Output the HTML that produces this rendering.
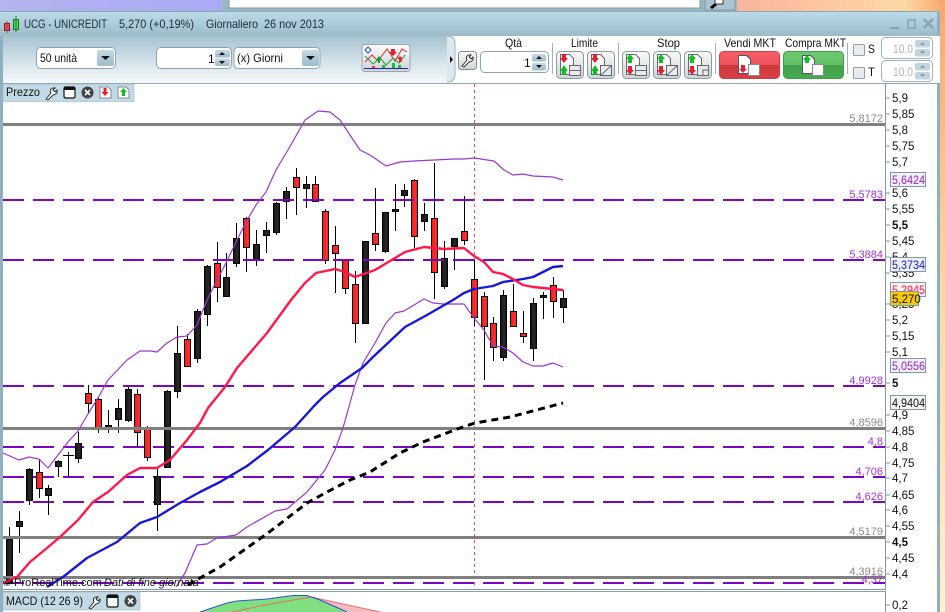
<!DOCTYPE html>
<html><head><meta charset="utf-8"><style>
html,body{margin:0;padding:0;background:#fff;overflow:hidden;width:945px;height:612px}
svg{display:block;font-family:"Liberation Sans",sans-serif;font-size:11px}
</style></head><body>
<svg width="945" height="612" viewBox="0 0 945 612" xmlns="http://www.w3.org/2000/svg">
<defs>
<linearGradient id="tb" x1="0" y1="0" x2="0" y2="1"><stop offset="0" stop-color="#bddcea"/><stop offset="1" stop-color="#9dbac8"/></linearGradient>
<linearGradient id="tool" x1="0" y1="0" x2="0" y2="1"><stop offset="0" stop-color="#a6c2d0"/><stop offset=".6" stop-color="#d8e6ec"/><stop offset="1" stop-color="#f4f8fa"/></linearGradient>
<linearGradient id="btn" x1="0" y1="0" x2="0" y2="1"><stop offset="0" stop-color="#c4d8e4"/><stop offset="1" stop-color="#9dbccd"/></linearGradient>
<linearGradient id="grey" x1="0" y1="0" x2="0" y2="1"><stop offset="0" stop-color="#fafafa"/><stop offset="1" stop-color="#cfd4d6"/></linearGradient>
<linearGradient id="or" x1="0" y1="0" x2="1" y2="0"><stop offset="0" stop-color="#f8b59e"/><stop offset=".45" stop-color="#fdc8a0"/><stop offset=".8" stop-color="#fdd8a6"/><stop offset="1" stop-color="#f6a868"/></linearGradient>
<linearGradient id="rc" x1="0" y1="0" x2="0" y2="1"><stop offset="0" stop-color="#f6a870"/><stop offset=".5" stop-color="#fdd9a8"/><stop offset="1" stop-color="#fff0d0"/></linearGradient>
<linearGradient id="lav" x1="0" y1="0" x2="1" y2="0"><stop offset="0" stop-color="#b4b4ee"/><stop offset="1" stop-color="#a9a9f6"/></linearGradient>
<linearGradient id="red" x1="0" y1="0" x2="0" y2="1"><stop offset="0" stop-color="#f46068"/><stop offset=".5" stop-color="#ee5058"/><stop offset=".51" stop-color="#cc383c"/><stop offset="1" stop-color="#d84044"/></linearGradient>
<linearGradient id="grn" x1="0" y1="0" x2="0" y2="1"><stop offset="0" stop-color="#6cc870"/><stop offset=".5" stop-color="#60c066"/><stop offset=".51" stop-color="#3ea048"/><stop offset="1" stop-color="#48aa50"/></linearGradient>
<linearGradient id="blk" x1="0" y1="0" x2="1" y2="0"><stop offset="0" stop-color="#111"/><stop offset=".6" stop-color="#2a2a2a"/><stop offset="1" stop-color="#111"/></linearGradient>
<linearGradient id="rd" x1="0" y1="0" x2="1" y2="0"><stop offset="0" stop-color="#f01818"/><stop offset=".7" stop-color="#ff3030"/><stop offset="1" stop-color="#e81818"/></linearGradient>
</defs>

<!-- desktop background -->
<rect width="945" height="612" fill="#fff"/>
<rect x="0" y="0" width="222" height="11" fill="url(#lav)"/>
<rect x="222" y="0" width="515" height="11" fill="#9db6c4"/>
<rect x="229" y="-2" width="471" height="10" fill="#fff" stroke="#7f98a6"/>
<rect x="705" y="-2" width="30" height="12" fill="#a9c3d0" stroke="#7f98a6"/>
<rect x="737" y="0" width="208" height="11" fill="url(#or)"/>
<rect x="940" y="0" width="5" height="612" fill="url(#rc)"/>
<path d="M711 8l5-4" stroke="#000" stroke-width="3"/><rect x="715" y="-2" width="8" height="6" fill="#fff" stroke="#333"/>

<!-- window chrome -->
<rect x="0" y="11" width="940" height="25" fill="url(#tb)"/>
<rect x="0" y="11" width="940" height="1" fill="#8aa6b4"/>
<rect x="0" y="36" width="940" height="47" fill="url(#tool)"/>
<rect x="937" y="11" width="3" height="601" fill="#8fb0c0"/>
<rect x="0" y="36" width="3" height="576" fill="#90b0c0"/>
<rect x="0" y="83" width="940" height="1" fill="#90a8b4"/>

<!-- title -->
<rect x="4.5" y="23.5" width="5" height="7" fill="#f05058" stroke="#802020"/><path d="M7 21v12" stroke="#a04040"/>
<rect x="13.5" y="19.5" width="5" height="10" fill="#40e050" stroke="#207030"/><path d="M16 16v16" stroke="#208030"/>
<g fill="#1c2c38" font-size="12">
<text x="24" y="28" textLength="83" lengthAdjust="spacingAndGlyphs">UCG - UNICREDIT</text>
<text x="119" y="28" textLength="75" lengthAdjust="spacingAndGlyphs">5,270 (+0,19%)</text>
<text x="206" y="28" textLength="52" lengthAdjust="spacingAndGlyphs">Giornaliero</text>
<text x="264" y="28" textLength="60" lengthAdjust="spacingAndGlyphs">26 nov 2013</text>
</g>

<!-- window buttons -->
<g fill="none" stroke="#8ba5b2" stroke-width="2"><path d="M890 28h9"/><rect x="908" y="20" width="7" height="8" stroke-width="1.5"/><path d="M924 19l9 9M933 19l-9 9" stroke-width="2.4"/></g>

<!-- left toolbar -->
<rect x="36.5" y="47.5" width="79" height="21" rx="4" fill="#fff" stroke="#8ca4b2"/>
<text x="40" y="62" font-size="12" fill="#111" textLength="37" lengthAdjust="spacingAndGlyphs">50 unità</text>
<rect x="97" y="50" width="17" height="16" rx="2" fill="url(#btn)"/><path d="M101 56h9l-4.500 4z" fill="#111"/>
<rect x="156.500" y="47.500" width="75" height="21" rx="4" fill="#fff" stroke="#8ca4b2"/>
<text x="208" y="63" font-size="12" fill="#111">1</text>
<rect x="215" y="50" width="15" height="7.500" rx="2" fill="url(#btn)"/><rect x="215" y="58.500" width="15" height="7.500" rx="2" fill="url(#btn)"/>
<path d="M219 55h6l-3-3zM219 61h6l-3 3z" fill="#111"/>
<rect x="234" y="47.500" width="86" height="21" rx="4" fill="#fff" stroke="#8ca4b2"/>
<text x="237" y="62" font-size="12" fill="#111" textLength="46" lengthAdjust="spacingAndGlyphs">(x) Giorni</text>
<rect x="302" y="50" width="17" height="16" rx="2" fill="url(#btn)"/><path d="M306 56h9l-4.500 4z" fill="#111"/>

<rect x="362" y="44.500" width="48" height="27" rx="3" fill="url(#grey)" stroke="#9aa8b0"/>
<path d="M365 62l7-7 6 6 9-12 8 12 7-12 5 3" fill="none" stroke="#e03030"/>
<path d="M365 56l8 8 7-6 6 7 7-7 6 5 6-8" fill="none" stroke="#18a030"/>
<rect x="364" y="68" width="44" height="1" fill="#2020c0"/>
<rect x="372" y="66" width="3" height="2" fill="#e03050"/><rect x="382" y="65" width="3" height="3" fill="#10c040"/><rect x="392" y="63" width="3" height="5" fill="#10c040"/><rect x="398" y="65" width="3" height="3" fill="#10c040"/>
<path d="M391 49h4v3h2l-4 4-4-4h2zM402 62h-3v-3h-2l3-3 3 3h-2z" fill="#e02030"/>
<path d="M378 63v-3h-2l3-4 3 4h-2v3z" fill="#10a030"/>
<path d="M368 47l3 3-3 3-3-3z" fill="#fff" stroke="#2050c0"/>

<!-- right toolbar panel -->
<path d="M447 36h493v47H455l-8-4z" fill="#fff"/>
<path d="M447 36q8 0 8 8v30q0 8-8 8" fill="#dce8ee" stroke="#a0b4bf"/>
<path d="M450 56v7l3-3.500z" fill="#111"/>
<rect x="458.500" y="51.500" width="18" height="18" rx="3" fill="url(#grey)" stroke="#7f8f98"/>
<path d="M462 66l5-6q-2-4 2-5l2 0-2 2 2 2 2-2q1 4-4 5l-5 5z" fill="#fff" stroke="#222" stroke-width=".9"/>
<rect x="480.500" y="51.500" width="68" height="21" rx="4" fill="#fff" stroke="#8ca4b2"/>
<text x="524" y="67" font-size="12" fill="#111">1</text>
<rect x="532" y="54" width="14" height="7.500" rx="2" fill="url(#btn)"/><rect x="532" y="63" width="14" height="7.500" rx="2" fill="url(#btn)"/>
<path d="M536 59h6l-3-3zM536 65h6l-3 3z" fill="#111"/>
<g font-size="12" fill="#111">
<text x="505" y="47" textLength="17" lengthAdjust="spacingAndGlyphs">Qtà</text>
<text x="571" y="47" textLength="27" lengthAdjust="spacingAndGlyphs">Limite</text>
<text x="657" y="47" textLength="23" lengthAdjust="spacingAndGlyphs">Stop</text>
<text x="724" y="47" textLength="52" lengthAdjust="spacingAndGlyphs">Vendi MKT</text>
<text x="785" y="47" textLength="61" lengthAdjust="spacingAndGlyphs">Compra MKT</text>
<text x="868" y="53" textLength="7" lengthAdjust="spacingAndGlyphs">S</text>
<text x="868" y="76" textLength="7" lengthAdjust="spacingAndGlyphs">T</text>
</g>
<g stroke="#9fb2bc"><path d="M552.500 43v31M618.500 43v31M715.500 43v31M847.500 43v31"/></g>

<!-- order buttons -->
<g fill="url(#grey)" stroke="#8c9aa2">
<rect x="556.500" y="51.500" width="27" height="27" rx="4"/><rect x="587.500" y="51.500" width="27" height="27" rx="4"/>
<rect x="622.500" y="51.500" width="27" height="27" rx="4"/><rect x="653.500" y="51.500" width="27" height="27" rx="4"/><rect x="684.500" y="51.500" width="27" height="27" rx="4"/>
</g>
<g fill="#fff" stroke="#667">
<path d="M560.500 54.500h9l4 4v16h-13zM591.500 54.500h9l4 4v16h-13zM626.500 54.500h9l4 4v16h-13zM657.500 54.500h9l4 4v16h-13zM688.500 54.500h9l4 4v16h-13z"/>
</g>
<g fill="#e8eaea" stroke="#667">
<rect x="569.500" y="65.500" width="11" height="10"/><rect x="600.500" y="65.500" width="11" height="10"/><rect x="635.500" y="65.500" width="11" height="10"/><rect x="666.500" y="65.500" width="11" height="10"/><rect x="697.500" y="65.500" width="11" height="10"/>
</g>
<g stroke="#667" fill="none"><path d="M569.500 70.500h11M635.500 70.500h11M600.500 75.500l11-10M666.500 75.500l11-10M703 75v-5h5"/></g>
<g fill="#e8202c">
<path d="M562 54h4v4h2l-4 5-4-5h2zM593 54h4v4h2l-4 5-4-5h2z"/>
<path d="M628 66h4v4h2l-4 5-4-5h2zM659 66h4v4h2l-4 5-4-5h2zM690 66h4v4h2l-4 5-4-5h2z"/>
</g>
<g fill="#10c020">
<path d="M562 75h4v-4h2l-4-6-4 6h2zM593 75h4v-4h2l-4-6-4 6h2z"/>
<path d="M628 63h4v-4h2l-4-5-4 5h2zM659 63h4v-4h2l-4-5-4 5h2zM690 63h4v-4h2l-4-5-4 5h2z"/>
</g>

<rect x="719.500" y="51.500" width="60" height="27" rx="4" fill="url(#red)" stroke="#c84048"/>
<rect x="783.500" y="51.500" width="60" height="27" rx="4" fill="url(#grn)" stroke="#3e9e48"/>
<path d="M738.500 55.500h8l4 4v14h-12zM802.500 55.500h8l4 4v14h-12z" fill="#fff" stroke="#556"/>
<rect x="748.500" y="64.500" width="11" height="11" fill="#fff" stroke="#889"/><rect x="812.500" y="64.500" width="11" height="11" fill="#fff" stroke="#889"/>
<path d="M741 65h4v4h2l-4 4-4-4h2z" fill="#e8202c"/><path d="M805 63h4v-3h2l-4-5-4 5h2z" fill="#10c020"/>

<rect x="853.500" y="44.500" width="11" height="11" rx="1" fill="#e8ecee" stroke="#8ca0aa"/>
<rect x="853.500" y="67.500" width="11" height="11" rx="1" fill="#e8ecee" stroke="#8ca0aa"/>
<rect x="881.500" y="37.500" width="51" height="21" rx="4" fill="#fff" stroke="#9fb4c0"/>
<rect x="881.500" y="60.500" width="51" height="21" rx="4" fill="#fff" stroke="#9fb4c0"/>
<text x="893" y="53" font-size="12" fill="#aab6be" textLength="20" lengthAdjust="spacingAndGlyphs">10.0</text>
<text x="893" y="76" font-size="12" fill="#aab6be" textLength="20" lengthAdjust="spacingAndGlyphs">10.0</text>
<rect x="915" y="40" width="15" height="7.500" rx="2" fill="#c2d4de"/><rect x="915" y="49" width="15" height="7.500" rx="2" fill="#c2d4de"/>
<rect x="915" y="63" width="15" height="7.500" rx="2" fill="#c2d4de"/><rect x="915" y="72" width="15" height="7.500" rx="2" fill="#c2d4de"/>
<path d="M920 45h5l-2.500-3zM920 51h5l-2.500 3zM920 68h5l-2.500-3zM920 74h5l-2.500 3z" fill="#8a9aa4"/>

<!-- chart background -->
<rect x="3" y="84" width="883" height="505" fill="#fff"/>

<!-- purple lower lines (behind candles) -->
<g stroke="#7b08c0" stroke-width="2" stroke-dasharray="21 9" fill="none">
<path d="M3 386H886M3 447H886M3 477H886M3 502H886M3 583H886"/>
</g>
<!-- cursor -->
<path d="M474.500 84V588" stroke="#e85058" stroke-dasharray="3 3"/>

<!-- wicks -->
<g stroke="#000" shape-rendering="crispEdges" fill="none">
<path d="M9.500 527V582M19.500 511V553M29.500 468V505M39.500 460V498M48.500 485V515M58.500 460V477M68.500 452V477M78.500 432V463M88.500 385V413M98.500 398V433M108.500 410V433M118.500 399V433M128.500 387V422M137.500 389V447M147.500 426V461M157.500 468V531M167.500 390V468M177.500 326V398M187.500 334V365M197.500 309V363M207.500 265V326M217.500 242V302M226.500 253V297M236.500 223V267M246.500 217V272M256.500 230V266M266.500 222V253M276.500 202V235M286.500 187V219M296.500 168V215M306.500 176V208M315.500 176V202M325.500 209V264M335.500 226V293M345.500 260V294M355.500 271V343M365.500 241V323M375.500 188V251M385.500 212V253M395.500 184V231M404.500 184V207M414.500 179V248M424.500 203V231M434.500 163V299M444.500 241V289M454.500 238V270M464.500 196V245M474.500 260V326M484.500 292V380M493.500 317V361M503.500 290V361M513.500 284V327M523.500 311V343M533.500 298V361M543.500 292V319M553.500 277V318M563.500 290V323"/>
<path d="M63 455.500H74"/>
</g>
<!-- black bodies -->
<g fill="url(#blk)" stroke="#000" shape-rendering="crispEdges">
<rect x="6.500" y="539.500" width="6" height="44"/><rect x="16.500" y="521.500" width="6" height="5"/>
<rect x="26.500" y="469.500" width="6" height="31"/><rect x="45.500" y="488.500" width="6" height="7"/>
<rect x="55.500" y="461.500" width="6" height="5"/><rect x="75.500" y="443.500" width="6" height="15"/>
<rect x="105.500" y="425.500" width="6" height="3"/><rect x="115.500" y="408.500" width="6" height="11"/>
<rect x="125.500" y="389.500" width="6" height="31"/><rect x="154.500" y="476.500" width="6" height="28"/>
<rect x="164.500" y="391.500" width="6" height="76"/><rect x="174.500" y="353.500" width="6" height="38"/>
<rect x="194.500" y="311.500" width="6" height="47"/><rect x="204.500" y="266.500" width="6" height="48"/>
<rect x="223.500" y="277.500" width="6" height="19"/><rect x="233.500" y="238.500" width="6" height="25"/>
<rect x="253.500" y="244.500" width="6" height="14"/><rect x="263.500" y="230.500" width="6" height="5"/>
<rect x="273.500" y="203.500" width="6" height="29"/><rect x="283.500" y="191.500" width="6" height="10"/>
<rect x="303.500" y="184.500" width="6" height="4"/><rect x="362.500" y="241.500" width="6" height="82"/>
<rect x="382.500" y="212.500" width="6" height="39"/><rect x="392.500" y="209.500" width="6" height="2"/>
<rect x="401.500" y="190.500" width="6" height="5"/><rect x="421.500" y="214.500" width="6" height="7"/>
<rect x="441.500" y="258.500" width="6" height="28"/><rect x="451.500" y="238.500" width="6" height="8"/>
<rect x="500.500" y="295.500" width="6" height="62"/><rect x="530.500" y="303.500" width="6" height="45"/>
<rect x="540.500" y="295.500" width="6" height="2"/><rect x="560.500" y="298.500" width="6" height="9"/>
</g>
<!-- red bodies -->
<g fill="url(#rd)" stroke="#000" shape-rendering="crispEdges">
<rect x="36.500" y="472.500" width="6" height="16"/><rect x="85.500" y="393.500" width="6" height="10"/>
<rect x="95.500" y="399.500" width="6" height="29"/><rect x="134.500" y="394.500" width="6" height="38"/>
<rect x="144.500" y="427.500" width="6" height="30"/><rect x="184.500" y="339.500" width="6" height="27"/>
<rect x="214.500" y="263.500" width="6" height="24"/><rect x="243.500" y="218.500" width="6" height="29"/>
<rect x="293.500" y="177.500" width="6" height="10"/><rect x="312.500" y="184.500" width="6" height="17"/>
<rect x="322.500" y="211.500" width="6" height="49"/><rect x="332.500" y="245.500" width="6" height="8"/>
<rect x="342.500" y="260.500" width="6" height="28"/><rect x="352.500" y="284.500" width="6" height="39"/>
<rect x="372.500" y="233.500" width="6" height="11"/><rect x="411.500" y="180.500" width="6" height="56"/>
<rect x="431.500" y="218.500" width="6" height="54"/><rect x="461.500" y="231.500" width="6" height="9"/>
<rect x="471.500" y="279.500" width="6" height="38"/><rect x="481.500" y="296.500" width="6" height="30"/>
<rect x="490.500" y="323.500" width="6" height="24"/><rect x="510.500" y="311.500" width="6" height="15"/>
<rect x="520.500" y="333.500" width="6" height="3"/><rect x="550.500" y="285.500" width="6" height="16"/>
</g>

<!-- upper purple lines & gray lines -->
<g stroke="#7b08c0" stroke-width="2" stroke-dasharray="21 9" fill="none"><path d="M3 200H886M3 260H886"/></g>
<g fill="#808080"><rect x="3" y="123" width="883" height="3"/><rect x="3" y="427" width="883" height="3"/><rect x="3" y="536" width="883" height="3"/><rect x="3" y="576" width="883" height="3"/></g>

<!-- indicators -->
<g fill="none" stroke-linejoin="round">
<polyline stroke="#9a38d0" stroke-width="1.200" points="3,453 19,460 29,457 39,459 48,468 58,455 68,442 78,431 88,414 98,398 108,380 127,360 140,351 150,351 157,352 167,343 177,337 187,336 197,325 207,300 217,280 226,263 236,242 246,222 256,205 266,192 276,170 288,150 305,120 318,111 330,112 340,120 350,135 360,150 370,155 386,166 400,162 414,161 434,160 454,159 464,159 474,158 494,161 504,170 513,175 523,174 533,176 553,177 563,180"/>
<polyline stroke="#9a38d0" stroke-width="1.200" points="176,587 185,573 197,545 207,544 217,538 236,535 247,527 275,511 287,509 307,492 325,470 335,450 343,428 355,385 363,363 375,343 386,323 395,313 404,311 424,299 433,303 443,304 464,304 474,318 484,330 493,346 503,347 513,353 523,362 533,366 543,366 553,363 563,367"/>
<polyline stroke="#1818d8" stroke-width="2.400" points="47,587 63,577 87,558 117,542 140,523 157,517 180,503 200,492 220,482 247,466 268,450 295,427 315,405 323,397 340,383 362,368 373,357 405,327 427,315 453,300 464,293 474,289 493,286 503,282 523,279 533,277 553,267 563,266"/>
<polyline stroke="#ff1848" stroke-width="2.400" points="3,583 17,577 30,562 47,548 60,537 78,520 93,502 108,492 127,475 140,468 157,468 170,460 187,440 200,423 208,408 225,387 237,368 267,333 291,300 305,283 316,273 335,269 345,272 355,277 375,270 400,255 405,252 424,247 434,248 444,249 464,248 474,256 484,262 493,272 503,274 513,279 523,285 533,287 553,289 563,290"/>
<polyline stroke="#000" stroke-width="3" stroke-dasharray="7 5" points="188,585 200,578 220,567 268,533 307,503 327,492 350,480 370,472 400,453 423,442 460,428 475,423 510,417 563,403"/>
</g>

<!-- line labels -->
<g text-anchor="end" font-size="11">
<g fill="#8c8c8c"><text x="883" y="122">5,8172</text><text x="883" y="426">4,8596</text><text x="883" y="535">4,5179</text><text x="883" y="575">4,3916</text></g>
<g fill="#a030d8"><text x="883" y="198">5,5783</text><text x="883" y="258">5,3884</text><text x="883" y="384">4,9928</text><text x="883" y="445">4,8</text><text x="883" y="475">4,706</text><text x="883" y="500">4,626</text><text x="883" y="583">4,37</text></g>
</g>

<!-- watermark -->
<text x="3" y="586" font-size="11" fill="#111"><tspan>© ProRealTime.com</tspan><tspan x="104" font-style="italic">Dati di fine giornata</tspan></text>

<!-- Prezzo header -->
<rect x="3" y="84" width="131" height="17.500" fill="#c2d9e6" stroke="#a0b4c0" stroke-width=".6"/>
<text x="6" y="96" font-size="12" fill="#111" textLength="34" lengthAdjust="spacingAndGlyphs">Prezzo</text>
<path d="M46 99l5-6q-2-4 2-5l2 0-2 2 2 2 2-2q1 4-4 5l-5 5z" fill="#fff" stroke="#222" stroke-width=".9"/>
<rect x="64" y="87" width="11" height="11" rx="1.500" fill="#fff" stroke="#111" stroke-width="1.200"/><rect x="64" y="87" width="11" height="3" fill="#111"/>
<circle cx="87.500" cy="92.500" r="6" fill="#444"/><path d="M85 90l5 5M90 90l-5 5" stroke="#fff" stroke-width="1.600"/>
<path d="M100 87h8l3 3v8h-11z" fill="#fff" stroke="#889"/><path d="M103.500 88h3v4h2l-3.500 4-3.500-4h2z" fill="#e8202c"/>
<path d="M118 87h8l3 3v8h-11z" fill="#fff" stroke="#889"/><path d="M122 96h3v-4h2l-3.500-4-3.500 4h2z" fill="#10c020"/>

<!-- axis -->
<path d="M885.500 83V589" stroke="#7f98a6"/>
<g stroke="#7f98a6"><path d="M886 98h4M886 114h4M886 130h4M886 146h4M886 162h4M886 193h4M886 209h4M886 225h4M886 241h4M886 257h4M886 273h4M886 304h4M886 320h4M886 336h4M886 352h4M886 383h4M886 415h4M886 431h4M886 447h4M886 463h4M886 478h4M886 495h4M886 510h4M886 526h4M886 542h4M886 558h4M886 574h4M886 605h4"/></g>
<g font-size="11.500" fill="#111">
<text x="892" y="102">5,9</text><text x="892" y="118">5,85</text><text x="892" y="134">5,8</text><text x="892" y="150">5,75</text><text x="892" y="166">5,7</text><text x="892" y="197">5,6</text><text x="892" y="213">5,55</text>
<text x="892" y="229" font-weight="bold">5,5</text>
<text x="892" y="245">5,45</text><text x="892" y="261">5,4</text><text x="892" y="277">5,35</text><text x="892" y="308">5,25</text><text x="892" y="324">5,2</text><text x="892" y="340">5,15</text><text x="892" y="356">5,1</text>
<text x="892" y="387" font-weight="bold">5</text>
<text x="892" y="419">4,9</text><text x="892" y="435">4,85</text><text x="892" y="451">4,8</text><text x="892" y="467">4,75</text><text x="892" y="482">4,7</text><text x="892" y="499">4,65</text><text x="892" y="514">4,6</text><text x="892" y="530">4,55</text>
<text x="892" y="546" font-weight="bold">4,5</text>
<text x="892" y="562">4,45</text><text x="892" y="578">4,4</text>
<text x="892" y="609">0,2</text>
</g>
<!-- value boxes -->
<g stroke="#7f98a6">
<rect x="890.500" y="172.500" width="35" height="14" fill="#f0f0f8"/>
<rect x="890.500" y="257.500" width="35" height="14" fill="#eef0ff"/>
<rect x="890.500" y="282.500" width="35" height="14" fill="#fff0f2"/>
<rect x="890.500" y="358.500" width="35" height="14" fill="#f0f0f8"/>
<rect x="890.500" y="395.500" width="35" height="14" fill="#f2f2f2"/>
</g>
<g font-size="11.500">
<text x="892" y="184" fill="#9a20d0" textLength="33" lengthAdjust="spacingAndGlyphs">5,6424</text>
<text x="892" y="269" fill="#1818d8" textLength="33" lengthAdjust="spacingAndGlyphs">5,3734</text>
<text x="892" y="294" fill="#ff1848" textLength="33" lengthAdjust="spacingAndGlyphs">5,2945</text>
<text x="892" y="370" fill="#9a20d0" textLength="33" lengthAdjust="spacingAndGlyphs">5,0556</text>
<text x="892" y="407" fill="#111" textLength="33" lengthAdjust="spacingAndGlyphs">4,9404</text>
</g>
<rect x="890.500" y="291.500" width="28" height="14" fill="#f6c808" stroke="#7f98a6"/>
<text x="892" y="303" font-size="11.500" fill="#111">5,270</text>

<!-- separator -->
<path d="M3 589.500H886" stroke="#7f98a6"/>
<path d="M3 591.500H886" stroke="#8ca0aa"/>
<path d="M885.500 591V612" stroke="#7f98a6"/>

<!-- MACD -->
<path d="M200 612L227 603 237 601 267 599 293 595.500 307 595.500 320 600 347 612Z" fill="#80e080"/>
<path d="M312 596.500L320 599.500 380 612H347Z" fill="#f4bcbc"/>
<path d="M232 612L260 606 293 600 312 597 320 599 380 612" fill="none" stroke="#e07070"/>
<path d="M200 612L227 603 237 601 267 599 293 595.500 307 595.500 320 600 347 612" fill="none" stroke="#3050e0"/>
<rect x="3" y="592" width="137" height="18" fill="#c2d9e6" stroke="#a0b4c0" stroke-width=".6"/>
<text x="6" y="605" font-size="12" fill="#111" textLength="77" lengthAdjust="spacingAndGlyphs">MACD (12 26 9)</text>
<path d="M89 608l5-6q-2-4 2-5l2 0-2 2 2 2 2-2q1 4-4 5l-5 5z" fill="#fff" stroke="#222" stroke-width=".9"/>
<rect x="107" y="595" width="11" height="12" rx="1.500" fill="#fff" stroke="#111" stroke-width="1.200"/><rect x="107" y="595" width="11" height="3" fill="#111"/>
<circle cx="130.500" cy="601" r="6" fill="#444"/><path d="M128 598.500l5 5M133 598.500l-5 5" stroke="#fff" stroke-width="1.600"/>
</svg>
</body></html>
